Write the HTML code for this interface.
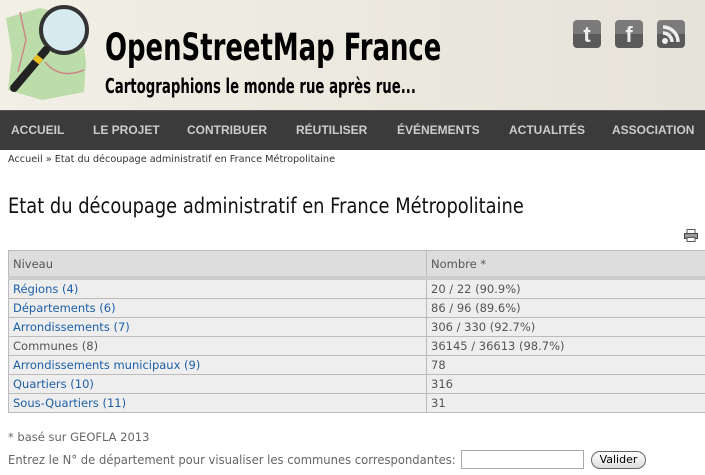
<!DOCTYPE html>
<html><head><meta charset="utf-8"><style>
body{margin:0;width:705px;height:475px;overflow:hidden;background:#fff;font-family:"DejaVu Sans",sans-serif;position:relative}
.hdr{position:absolute;left:0;top:0;width:705px;height:110px;background:linear-gradient(90deg,#f1efe6,#ece9df 50%,#e6e3da);}
.t1{position:absolute;left:105px;top:26px;font:bold 37px "DejaVu Sans",sans-serif;color:#000;white-space:nowrap;transform:scaleX(.70);transform-origin:left}
.t2{position:absolute;left:105px;top:74px;font:bold 20px "DejaVu Sans",sans-serif;color:#000;white-space:nowrap;transform:scaleX(.665);transform-origin:left}
.ic{position:absolute;top:20px;width:28px;height:28px;border-radius:4px;background:linear-gradient(#7a7a7a 50%,#5a5a5a 50%);color:#eee;font:bold 22px "Liberation Sans",sans-serif;text-align:center;line-height:30px}
.nav{position:absolute;left:0;top:110px;width:705px;height:40px;background:#3b3b3b;border-top:1px solid #555;box-sizing:border-box}
.nav span{position:absolute;top:12px;font:bold 12px "Liberation Sans",sans-serif;color:#ccc}
.bc{position:absolute;left:8px;top:154px;font-size:10px;color:#333;white-space:nowrap;transform:scaleX(.97);transform-origin:left}
h1{position:absolute;left:8px;top:194px;margin:0;font-weight:normal;font-size:21px;color:#111;white-space:nowrap;transform:scaleX(.85);transform-origin:left}
table{position:absolute;left:8px;top:250px;width:710px;border-collapse:collapse;font-size:11.5px}
td,th{border:1px solid #bbb;padding:0 4px;height:18px;text-align:left;background:#eee;color:#555;white-space:nowrap}
th{font-weight:normal;height:25px;background:#ddd;border-bottom:4px solid #ccc}
a{color:#1d5fa8;text-decoration:none}
.n{position:absolute;left:8px;top:430px;font-size:11.5px;color:#666}
.f{position:absolute;left:8px;top:452px;font-size:12.5px;color:#666;white-space:nowrap;transform:scaleX(.927);transform-origin:left}
</style></head><body>
<div class="hdr">
<svg style="position:absolute;left:0;top:0" width="100" height="105" viewBox="0 0 100 105">
<path d="M6 18 L40 8 L80 18 L86 62 L84 92 L42 100 L8 90 L12 55 Z" fill="#bcdcaa"/>
<path d="M20 12 L26 40 L18 72 M45 62 Q60 80 84 70" stroke="#c88" fill="none" stroke-width="1.5"/>
<circle cx="64" cy="30" r="23" fill="#d6eaf0" stroke="#333" stroke-width="4"/>
<line x1="46" y1="50" x2="14" y2="88" stroke="#222" stroke-width="8" stroke-linecap="round"/>
<line x1="40" y1="57" x2="36" y2="62" stroke="#e8c020" stroke-width="8"/>
</svg>
<div class="t1">OpenStreetMap France</div>
<div class="t2">Cartographions le monde rue après rue...</div>
<div class="ic" style="left:573px">t</div>
<div class="ic" style="left:615px">f</div>
<div class="ic" style="left:657px"><svg width="28" height="28" viewBox="0 0 28 28"><circle cx="8" cy="21" r="3" fill="#eee"/><path d="M6 13a9 9 0 0 1 9 9M6 7a15 15 0 0 1 15 15" stroke="#eee" stroke-width="3.5" fill="none"/></svg></div>
</div>
<div class="nav">
<span style="left:11px">ACCUEIL</span><span style="left:93px">LE PROJET</span><span style="left:187px">CONTRIBUER</span><span style="left:296px">RÉUTILISER</span><span style="left:397px">ÉVÉNEMENTS</span><span style="left:509px">ACTUALITÉS</span><span style="left:612px">ASSOCIATION</span>
</div>
<div class="bc">Accueil » Etat du découpage administratif en France Métropolitaine</div>
<h1>Etat du découpage administratif en France Métropolitaine</h1>
<svg style="position:absolute;left:684px;top:229px" width="14" height="13" viewBox="0 0 14 13"><rect x="3" y="0.5" width="8" height="4" fill="#fff" stroke="#555"/><rect x="0.5" y="4.5" width="13" height="5" fill="#999" stroke="#444"/><rect x="3" y="8.5" width="8" height="4" fill="#fff" stroke="#555"/></svg>
<table>
<tr><th style="width:409px">Niveau</th><th>Nombre *</th></tr>
<tr><td><a>Régions (4)</a></td><td>20 / 22 (90.9%)</td></tr>
<tr><td><a>Départements (6)</a></td><td>86 / 96 (89.6%)</td></tr>
<tr><td><a>Arrondissements (7)</a></td><td>306 / 330 (92.7%)</td></tr>
<tr><td>Communes (8)</td><td>36145 / 36613 (98.7%)</td></tr>
<tr><td><a>Arrondissements municipaux (9)</a></td><td>78</td></tr>
<tr><td><a>Quartiers (10)</a></td><td>316</td></tr>
<tr><td><a>Sous-Quartiers (11)</a></td><td>31</td></tr>
</table>
<div class="n">* basé sur GEOFLA 2013</div>
<div class="f">Entrez le N° de département pour visualiser les communes correspondantes:</div>
<div style="position:absolute;left:461px;top:450px;width:121px;height:17px;border:1px solid #aaa"></div>
<div style="position:absolute;left:591px;top:451px;width:53px;height:16px;border:1px solid #666;border-radius:9px;background:linear-gradient(#fff,#ddd);font-size:11px;text-align:center;line-height:16px">Valider</div>
</body></html>
